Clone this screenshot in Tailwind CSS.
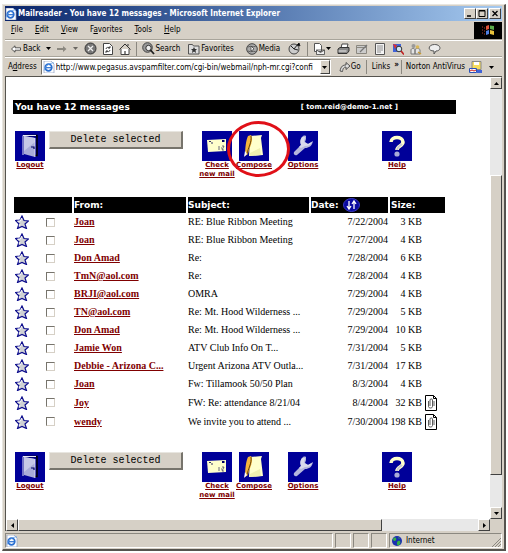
<!DOCTYPE html>
<html lang="en">
<head>
    <meta charset="UTF-8">
    <meta name="viewport" content="width=device-width, initial-scale=1.0">
    <title>Mailreader - You have 12 messages</title>
    <script src="https://cdn.jsdelivr.net/npm/@tailwindcss/browser@4"></script>
</head>
<body class="bg-white">

    <!-- Icon set -->
    <svg class="hidden">
        <symbol id="ie" viewBox="0 0 12 12">
            <path d="M1 0h7l3 3v9H1z" fill="#fff" stroke="#8a9cc0" stroke-width=".7"/>
            <circle cx="5.500" cy="6.500" r="3.300" fill="none" stroke="#2a6fd0" stroke-width="1.700"/>
            <path d="M3 6.700h6" stroke="#2a6fd0" stroke-width="1.200"/>
            <path d="M1 9.500C2 5 7 1.500 11 2" fill="none" stroke="#5b9be8" stroke-width=".8"/>
        </symbol>
        <symbol id="door" viewBox="0 0 30 30">
            <rect width="30" height="30" fill="#000099"/>
            <path d="M9 4.500h13v20h-3" fill="none" stroke="#000" stroke-width="1.500"/>
            <path d="M8 24V4.500h13" fill="none" stroke="#e8e8f4"/>
            <path d="M9 5l11 2v19L9 23z" fill="#a9acd8"/>
            <path d="M9 5l11 2v4L9 20z" fill="#c6c8e6"/>
            <path d="M20 7v19" stroke="#e6e6f8" stroke-width=".8"/>
            <path d="M16 16h3v2" fill="none" stroke="#000066" stroke-width="1.200"/>
        </symbol>
        <symbol id="envelope" viewBox="0 0 30 30">
            <rect width="30" height="30" fill="#000099"/>
            <path d="M5 9l19-1v12l-18 1z" fill="#ffffcc"/>
            <path d="M7 10.500h2M9 12h2" stroke="#333366"/>
            <rect x="20" y="9" width="2.500" height="2" fill="#000066"/>
            <path d="M17 15v4M20 15h2l-2 4h2M19 17h1" fill="none" stroke="#444466" stroke-width=".8"/>
        </symbol>
        <symbol id="scroll" viewBox="0 0 30 30">
            <rect width="30" height="30" fill="#000099"/>
            <path d="M11 5l12-1-1 3 2 17-14 1z" fill="#ffffcc"/>
            <path d="M11 22l10-5 1 7-11 1z" fill="#f0f0b0"/>
            <path d="M12 4c3 5-1 11-3 19l-3 2c0-8 1-16 3-20z" fill="#f4b53c"/>
            <path d="M12 5c1 6-3 12-4 18" fill="none" stroke="#402800" stroke-width=".8"/>
            <path d="M6 20l-1 6 3-3z" fill="#fff"/>
        </symbol>
        <symbol id="wrench" viewBox="0 0 30 30">
            <rect width="30" height="30" fill="#000099"/>
            <path d="M14 6c-2 3-2 5-1 8l-7 7c-1 2 1 4 3 3l8-7c4 0 7-2 8-7l-5 3-3-2 1-3 0-3c-2-1-3 0-4 1z" fill="#b4b6dc"/>
            <path d="M14 6c-2 3-2 5-1 8l-2 2 2 1 4-2c3 0 6-1 7-4l-4 2-4-2 1-5z" fill="#d8d9ec"/>
        </symbol>
        <symbol id="question" viewBox="0 0 30 30">
            <rect width="30" height="30" fill="#000099"/>
            <path d="M9 11c0-6 12-6 12 0 0 4-6 4-6 8" fill="none" stroke="#ffffcc" stroke-width="3.600"/>
            <path d="M15 19c0-3 3-4 5-6" fill="none" stroke="#c8c8d4" stroke-width="2"/>
            <circle cx="15" cy="23" r="2.600" fill="#a9acd8"/>
        </symbol>
        <symbol id="star" viewBox="0 0 14 14">
            <path d="M7 1l2 4.500 4.500.5-3.500 3 1.500 4.500L7 11.500l-4.500 2L4 9 .5 5.500 5 5z" fill="#cfd1d4" stroke="#0a0a8c" stroke-width="1.200"/>
            <path d="M6.500 3L5.500 6l-3 .2M4 11l1-2" fill="none" stroke="#fff"/>
        </symbol>
        <symbol id="clip" viewBox="0 0 12 16">
            <path d="M.5.5h8l3 3v12H.5z" fill="#fff" stroke="#000"/>
            <path d="M8.500.5v3h3" fill="none" stroke="#000"/>
            <path d="M3.500 6v5.500c0 2 4 2 4 0V5c0-1.500-2.500-1.500-2.500 0v6M9 6v5" fill="none" stroke="#333" stroke-width=".8"/>
        </symbol>
        <symbol id="caret" viewBox="0 0 5 3"><path d="M0 0h5L2.500 3z" fill="#000"/></symbol>
    </svg>

    <div class="p-0.5 pt-1 h-screen min-h-[400px]">
    <div class="h-full flex flex-col bg-[#d6d0c6] border-l border-t border-[#e8e6e0] border-r-2 border-b-2 border-r-[#55534e] border-b-[#55534e] px-0.5 pt-px font-['DejaVu_Sans_Condensed','DejaVu_Sans',sans-serif] text-[8px] leading-[10px] text-black">

        <!-- Title bar -->
        <div class="flex items-center h-[15px] pr-px gap-px bg-linear-to-r from-[#0a246a] to-[#a6caf0] text-white">
            <svg class="w-3 h-3"><use href="#ie"/></svg>
            <h1 class="flex-1 font-bold whitespace-nowrap">Mailreader - You have 12 messages - Microsoft Internet Explorer</h1>
            <div class="flex">
                <button aria-label="Minimize" class="w-3 h-[11px] bg-[#d6d0c6] border border-white border-r-[#404040] border-b-[#404040]"><svg viewBox="0 0 10 9"><path d="M2 7h4" stroke="#000" stroke-width="1.500"/></svg></button>
                <button aria-label="Maximize" class="w-3 h-[11px] bg-[#d6d0c6] border border-white border-r-[#404040] border-b-[#404040]"><svg viewBox="0 0 10 9"><path d="M2 1.500h6v6H2zM2 2h6" fill="none" stroke="#000"/></svg></button>
                <button aria-label="Close" class="w-3 h-[11px] ml-px bg-[#d6d0c6] border border-white border-r-[#404040] border-b-[#404040]"><svg viewBox="0 0 10 9"><path d="M2.500 2l5 5m0-5l-5 5" stroke="#000" stroke-width="1.300"/></svg></button>
            </div>
        </div>

        <!-- Menu bar -->
        <nav class="flex items-center h-[19px] pl-1.5 gap-3 border-b border-[#a8a49a]">
            <button><u>F</u>ile</button>
            <button><u>E</u>dit</button>
            <button><u>V</u>iew</button>
            <button>F<u>a</u>vorites</button>
            <button><u>T</u>ools</button>
            <button><u>H</u>elp</button>
            <span class="ml-auto w-7 h-[17px] bg-black flex items-center justify-center">
                <svg class="w-[13px] h-3" viewBox="0 0 13 12">
                    <path d="M4 2l3-1v4L4 6z" fill="#e0563c"/><path d="M8 1.500l4 .5v4L8 5z" fill="#5cae4c"/>
                    <path d="M4 7l3-1v4l-3 1z" fill="#4f7fe0"/><path d="M8 6l4 1v4l-4-1z" fill="#e8c33c"/>
                    <path d="M0 3h1M2 4h1M0 6h1M2 7h1M0 9h1M2 10h1" stroke="#b04030"/>
                </svg>
            </span>
        </nav>

        <!-- Toolbar -->
        <div class="flex items-center h-[17px] pl-1.5 border-t border-t-white border-b border-b-[#a8a49a] whitespace-nowrap">
            <button class="flex items-center gap-0.5"><svg class="w-[10px] h-2" viewBox="0 0 10 8"><path d="M.5 4L4 .8v2h5.500v2.400H4v2z" fill="#fff" stroke="#333" stroke-width=".8"/></svg>Back</button>
            <svg class="w-[5px] h-[3px] ml-1.5"><use href="#caret"/></svg>
            <button aria-label="Forward" class="ml-1.5"><svg class="w-[10px] h-2" viewBox="0 0 10 8"><path d="M9.500 4L6 1v2H0v2h6v2z" fill="#8b8880"/></svg></button>
            <svg class="w-[5px] h-[3px] ml-1.5 opacity-50"><use href="#caret"/></svg>
            <button aria-label="Stop" class="ml-1.5"><svg class="w-[13px] h-[13px]" viewBox="0 0 13 13"><circle cx="6.500" cy="6.500" r="5.500" fill="#777" stroke="#333"/><path d="M4 4l5 5m0-5L4 9" stroke="#eee" stroke-width="1.300"/></svg></button>
            <button aria-label="Refresh" class="ml-1.5"><svg class="w-[10px] h-3" viewBox="0 0 10 12"><path d="M.5.5h6l3 3v8h-9z" fill="#fff" stroke="#444"/><path d="M3 6c0-2 3-2 4-1M7 3v2H5M7 7c0 2-3 2-4 1M3 10V8h2" fill="none" stroke="#333" stroke-width=".9"/></svg></button>
            <button aria-label="Home" class="ml-1.5"><svg class="w-3 h-3" viewBox="0 0 12 12"><path d="M2 6v5.500h8V6" fill="#fff" stroke="#444"/><path d="M.5 6.500L6 1l5.500 5.500M9 3V1" fill="none" stroke="#333"/><path d="M5 11V8h2v3" fill="#888"/></svg></button>
            <span class="mx-[5px] w-px h-3.5 bg-[#8b8880]"></span>
            <button class="flex items-center"><svg class="w-[13px] h-[13px]" viewBox="0 0 13 13"><circle cx="5.500" cy="5.500" r="4.800" fill="#999" stroke="#444"/><circle cx="6.500" cy="6" r="2.700" fill="#eee" stroke="#333"/><path d="M8.500 8l3.500 4" stroke="#222" stroke-width="1.800"/></svg>Search</button>
            <button class="ml-2 flex items-center gap-px"><svg class="w-3 h-3" viewBox="0 0 12 12"><path d="M.5 1.500h4l1 1.500h5.500v8H.5z" fill="#ddd" stroke="#555"/><path d="M6 4l1 2h2L7.500 7.500 8 10 6 8.500 4 10l.5-2.500L3 6h2z" fill="#333"/></svg>Favorites</button>
            <button class="ml-3 flex items-center gap-px"><svg class="w-3 h-3" viewBox="0 0 12 12"><circle cx="6" cy="6" r="5.300" fill="#aaa" stroke="#444"/><path d="M2 4c3-2 5 1 8-1M2 8c3 2 5-1 8 1M5 3v5l3-2z" fill="#fff" stroke="#444" stroke-width=".8"/></svg>Media</button>
            <button aria-label="History" class="ml-2"><svg class="w-[13px] h-[13px]" viewBox="0 0 13 13"><circle cx="6" cy="7" r="5" fill="#ccc" stroke="#444"/><path d="M6 7l4-5m-4 5l4 1M3 4l3 3M11 1l1 3-3-1z" stroke="#222"/></svg></button>
            <span class="ml-1.5 mr-1 w-px h-3.5 bg-[#8b8880]"></span>
            <button aria-label="Mail" class="flex items-center gap-px"><svg class="w-[13px] h-3" viewBox="0 0 13 12"><path d="M2.500.5h5l2 2v6h-7z" fill="#fff" stroke="#555"/><path d="M4.500 7h8v4.500h-8zl4 2.500 4-2.500" fill="#eee" stroke="#444" stroke-width=".8"/></svg><svg class="w-[5px] h-[3px]"><use href="#caret"/></svg></button>
            <button aria-label="Print" class="ml-1.5"><svg class="w-[13px] h-3" viewBox="0 0 13 12"><path d="M4 5l1-4h6l-1 4" fill="#fff" stroke="#444"/><path d="M1 6l2-1.500h9V8l-2 2.500H1z" fill="#888" stroke="#333"/><path d="M1.500 8h8" stroke="#eee"/></svg></button>
            <button aria-label="Edit" class="ml-1.5"><svg class="w-3 h-3" viewBox="0 0 12 12"><path d="M.5 2.500h10v8H.5zM.5 4.500h10" fill="#ccc" stroke="#8b8880"/><path d="M4 9l7-7" stroke="#777" stroke-width="1.300"/></svg></button>
            <button aria-label="Discuss" class="ml-1.5"><svg class="w-3 h-3" viewBox="0 0 12 12"><path d="M1.500.5h9v11h-9z" fill="#f4f4f4" stroke="#555"/><path d="M3 3h6M3 5h6M3 7h6M3 9h4" stroke="#777" stroke-width=".8"/></svg></button>
            <button aria-label="Research" class="ml-1.5"><svg class="w-3 h-3" viewBox="0 0 12 12"><path d="M1 1h8v8H1z" fill="#3f62d8"/><path d="M1 1l4 1-2 4z" fill="#e03030"/><circle cx="7" cy="6" r="2.800" fill="#cfe4f4" stroke="#333"/><path d="M9 8l3 3.500" stroke="#c02020" stroke-width="1.600"/></svg></button>
            <button aria-label="Messenger" class="ml-1.5"><svg class="w-3 h-3" viewBox="0 0 12 12"><path d="M1 11V7c0-2 4-2 4 0v4zM5 11V7c0-2 5-2 5 0v4z" fill="#e4e4e4" stroke="#777"/><circle cx="3.500" cy="3" r="2" fill="#999"/><circle cx="7.500" cy="4" r="1.800" fill="#d9b75a"/><path d="M8 9l3 2" stroke="#c79a30" stroke-width="1.500"/></svg></button>
            <button aria-label="Comments" class="ml-1.5"><svg class="w-[13px] h-3" viewBox="0 0 13 12"><path d="M6.500 1.500c7 0 7 6.500 1.500 6.500L6 11V8C-1 8 0 1.500 6.500 1.500z" fill="#eee" stroke="#555"/></svg></button>
        </div>

        <!-- Address bar -->
        <form class="flex items-center h-[19px] pl-[3px] whitespace-nowrap border-t border-t-white">
            <label for="address" class="mr-1">A<u>d</u>dress</label>
            <div class="flex flex-1 items-center h-4 min-w-0 bg-white border border-[#77746c] border-r-white border-b-white">
                <svg class="w-3 h-3 mx-px shrink-0"><use href="#ie"/></svg>
                <input id="address" type="text" readonly value="http://www.pegasus.avspamfilter.com/cgi-bin/webmail/nph-mr.cgi?confi" class="flex-1 min-w-0 h-3.5 outline-none">
                <button type="button" aria-label="Show addresses" class="w-[10px] h-3.5 flex items-center justify-center bg-[#d6d0c6] border border-white border-r-[#404040] border-b-[#404040]"><svg class="w-[5px] h-[3px]"><use href="#caret"/></svg></button>
            </div>
            <button type="button" class="ml-2 flex items-center"><svg class="w-3 h-3" viewBox="0 0 12 12"><path d="M1 10C2 5 4 4 7 4V1.500L11 5 7 8.500V6C5 6 4 7 3.500 10.500z" fill="#ddd" stroke="#444" stroke-width=".9"/></svg>Go</button>
            <span class="mx-[5px] w-px h-3.5 bg-[#8b8880]"></span>
            <span>Links</span>
            <button type="button" aria-label="More links" class="ml-1 mb-1 font-bold">»</button>
            <span class="ml-0.5 mr-1 w-px h-3.5 bg-[#8b8880]"></span>
            <span>Norton AntiVirus</span>
            <svg class="w-3.5 h-[13px] ml-1" viewBox="0 0 14 13"><path d="M3 .5h9v8H3z" fill="#f6dc5c" stroke="#888"/><path d="M5 1h5v3H5z" fill="#fff"/><path d="M.5 7.500h7v4h-7z" fill="#fff" stroke="#2a52b8"/><path d="M1 10l2-1 2 1 2-1" fill="none" stroke="#d02020"/><path d="M8 9h5v3H8z" fill="#3f62d8"/></svg>
            <svg class="w-[5px] h-[3px] ml-1.5 mr-2"><use href="#caret"/></svg>
        </form>

        <!-- Page area with scrollbars -->
        <div class="flex flex-1 min-h-0 border-l border-t border-[#55534e]">
            <main class="flex-1 min-w-0 overflow-hidden bg-white pl-[7px] pr-[34px] pt-[23px] font-['DejaVu_Sans',sans-serif]">
                <div class="flex items-center h-3.5 pl-0.5 pr-[58px] bg-black text-white font-bold whitespace-nowrap">
                    <h2 class="flex-1 text-[9px]">You have 12 messages</h2>
                    <span class="text-[7px]">[ tom.reid@demo-1.net ]</span>
                </div>

                <div class="flex items-start h-[49px] mt-[17px] ml-0.5 text-[7px] leading-[9px] font-bold text-[#800000] text-center">
                    <a href="#" class="w-[30px] underline"><svg class="w-[30px] h-[30px]"><use href="#door"/></svg>Logout</a>
                    <button class="w-[134px] h-[18px] ml-1 bg-[#d6d0c6] border border-[#e8e6e0] border-r-2 border-b-2 border-r-[#77746c] border-b-[#77746c] font-['Liberation_Mono',monospace] font-normal text-[10px] leading-4 text-black">Delete selected</button>
                    <a href="#" class="w-[34px] ml-[17px] flex flex-col items-center underline whitespace-nowrap"><svg class="w-[30px] h-[30px]"><use href="#envelope"/></svg><span>Check<br>new mail</span></a>
                    <a href="#" class="relative w-[34px] ml-[3px] flex flex-col items-center underline"><svg class="w-[30px] h-[30px]"><use href="#scroll"/></svg>Compose
                        <span class="absolute -left-2.5 -top-2.5 w-[63px] h-14 rounded-[50%] border-3 border-[#e01018]"></span>
                    </a>
                    <a href="#" class="w-[30px] ml-[17px] flex flex-col items-center underline"><svg class="w-[30px] h-[30px]"><use href="#wrench"/></svg>Options</a>
                    <a href="#" class="w-[30px] ml-16 underline"><svg class="w-[30px] h-[30px]"><use href="#question"/></svg>Help</a>
                </div>

                <!-- Message list -->
                <table class="w-[435px] mt-[17px] table-fixed border-separate border-spacing-x-0.5 border-spacing-y-0 -ml-px font-['Liberation_Serif',serif] text-[10px] leading-3 whitespace-nowrap">
                    <colgroup>
                        <col class="w-7">
                        <col class="w-7">
                        <col class="w-28">
                        <col class="w-[121px]">
                        <col class="w-[77px]">
                        <col class="w-8">
                        <col class="w-[21px]">
                    </colgroup>
                    <thead>
                        <tr class="h-4 font-['DejaVu_Sans',sans-serif] text-[9px] text-white text-left">
                            <th colspan="2" aria-label="Select" class="bg-black"></th>
                            <th class="bg-black">From:</th>
                            <th class="bg-black">Subject:</th>
                            <th class="bg-black"><span class="flex items-center gap-1">Date:
                                <button aria-label="Sort by date"><svg class="w-[17px] h-3.5" viewBox="0 0 17 14"><ellipse cx="8.500" cy="7" rx="8" ry="6.500" fill="#0a0aa0" stroke="#3a3ac0"/><path d="M6 3v7M4 8l2 3 2-3M11 11V4M9 6l2-3 2 3" fill="none" stroke="#fff" stroke-width="1.300"/></svg></button></span></th>
                            <th colspan="2" class="pl-px bg-black">Size:</th>
                        </tr>
                    </thead>
                    <tbody id="messages"></tbody>
                </table>

                <div class="flex items-start h-[49px] mt-[21px] ml-0.5 text-[7px] leading-[9px] font-bold text-[#800000] text-center">
                    <a href="#" class="w-[30px] underline"><svg class="w-[30px] h-[30px]"><use href="#door"/></svg>Logout</a>
                    <button class="w-[134px] h-[18px] ml-1 bg-[#d6d0c6] border border-[#e8e6e0] border-r-2 border-b-2 border-r-[#77746c] border-b-[#77746c] font-['Liberation_Mono',monospace] font-normal text-[10px] leading-4 text-black">Delete selected</button>
                    <a href="#" class="w-[34px] ml-[17px] flex flex-col items-center underline whitespace-nowrap"><svg class="w-[30px] h-[30px]"><use href="#envelope"/></svg><span>Check<br>new mail</span></a>
                    <a href="#" class="w-[34px] ml-[3px] flex flex-col items-center underline"><svg class="w-[30px] h-[30px]"><use href="#scroll"/></svg>Compose</a>
                    <a href="#" class="w-[30px] ml-[17px] flex flex-col items-center underline"><svg class="w-[30px] h-[30px]"><use href="#wrench"/></svg>Options</a>
                    <a href="#" class="w-[30px] ml-16 underline"><svg class="w-[30px] h-[30px]"><use href="#question"/></svg>Help</a>
                </div>
            </main>

            <!-- Vertical scrollbar -->
            <div class="w-3 flex flex-col bg-[#e8e8e8]">
                <button aria-label="Scroll up" class="h-3 flex items-center justify-center bg-[#d6d0c6] border border-white border-r-[#404040] border-b-[#404040]"><svg class="w-[5px] h-[3px] rotate-180"><use href="#caret"/></svg></button>
                <div class="grow-[86]"></div>
                <div class="grow-[300] bg-[#d6d0c6] border border-white border-r-[#404040] border-b-[#404040]"></div>
                <div class="grow-[32]"></div>
                <button aria-label="Scroll down" class="h-3 flex items-center justify-center bg-[#d6d0c6] border border-white border-r-[#404040] border-b-[#404040]"><svg class="w-[5px] h-[3px]"><use href="#caret"/></svg></button>
            </div>
        </div>

        <!-- Horizontal scrollbar -->
        <div class="flex h-3 bg-[#e8e8e8] border-l border-[#55534e]">
            <button aria-label="Scroll left" class="w-3 flex items-center justify-center bg-[#d6d0c6] border border-white border-r-[#404040] border-b-[#404040]"><svg class="w-[3px] h-[5px]" viewBox="0 0 3 5"><path d="M3 0v5L0 2.500z"/></svg></button>
            <div class="grow-[363] bg-[#d6d0c6] border border-white border-r-[#404040] border-b-[#404040]"></div>
            <div class="grow-[96]"></div>
            <button aria-label="Scroll right" class="w-3 flex items-center justify-center bg-[#d6d0c6] border border-white border-r-[#404040] border-b-[#404040]"><svg class="w-[3px] h-[5px]" viewBox="0 0 3 5"><path d="M0 0v5l3-2.500z"/></svg></button>
            <div class="w-3 bg-[#d6d0c6]"></div>
        </div>

        <!-- Status bar -->
        <footer class="flex h-[18px] pt-0.5 pb-px gap-0.5">
            <div class="flex-1 flex items-center border border-[#8b8880] border-b-white border-r-white"><svg class="w-3 h-3"><use href="#ie"/></svg></div>
            <div class="w-4 border border-[#8b8880] border-b-white border-r-white"></div>
            <div class="w-4 border border-[#8b8880] border-b-white border-r-white"></div>
            <div class="w-4 border border-[#8b8880] border-b-white border-r-white"></div>
            <div class="w-[113px] pl-0.5 flex items-center gap-1 border border-[#8b8880] border-b-white border-r-white">
                <svg class="w-[10px] h-[10px]" viewBox="0 0 10 10"><circle cx="5" cy="5" r="5" fill="#1a2fb0"/><path d="M1 3c2-3 4-1 3 1S1 5 1 3zM6 5c3-1 3 2 1 4S4 6 6 5zM6 1l2 1-1 1z" fill="#35b045"/></svg>
                Internet
                <svg class="w-[9px] h-[9px] ml-auto self-end" viewBox="0 0 9 9"><path d="M0 9l9-9M3 9l6-6M6 9l3-3" stroke="#8b8880"/></svg>
            </div>
        </footer>
    </div>
    </div>

    <script>
        const messages = [
            ["Joan", "RE: Blue Ribbon Meeting", "7/22/2004", 3],
            ["Joan", "RE: Blue Ribbon Meeting", "7/27/2004", 4],
            ["Don Amad", "Re:", "7/28/2004", 6],
            ["TmN@aol.com", "Re:", "7/28/2004", 4],
            ["BRJI@aol.com", "OMRA", "7/29/2004", 4],
            ["TN@aol.com", "Re: Mt. Hood Wilderness ...", "7/29/2004", 5],
            ["Don Amad", "Re: Mt. Hood Wilderness ...", "7/29/2004", 10],
            ["Jamie Won", "ATV Club Info On T...", "7/31/2004", 5],
            ["Debbie - Arizona C...", "Urgent Arizona ATV Outla...", "7/31/2004", 17],
            ["Joan", "Fw: Tillamook 50/50 Plan", "8/3/2004", 4],
            ["Joy", "FW: Re: attendance 8/21/04", "8/4/2004", 32, true],
            ["wendy", "We invite you to attend ...", "7/30/2004", 198, true],
        ];

        document.getElementById("messages").innerHTML = messages.map(([from, subject, date, size, clip]) => `
            <tr class="${clip ? "h-[19px]" : "h-[18px]"}">
                <td><svg class="w-3.5 h-3.5 ml-px"><use href="#star"/></svg></td>
                <td><input type="checkbox" aria-label="Select message from ${from}" class="block appearance-none w-[9px] h-[9px] ml-0.5 border border-[#77746c] border-r-[#d6d0c6] border-b-[#d6d0c6]"></td>
                <td><a href="#" class="font-bold underline text-[#800000]">${from}</a></td>
                <td>${subject}</td>
                <td class="text-right">${date}</td>
                <td class="text-right">${size} KB</td>
                <td>${clip ? '<svg class="w-3 h-4 ml-px"><use href="#clip"/></svg>' : ""}</td>
            </tr>`).join("");
    </script>
</body>
</html>
